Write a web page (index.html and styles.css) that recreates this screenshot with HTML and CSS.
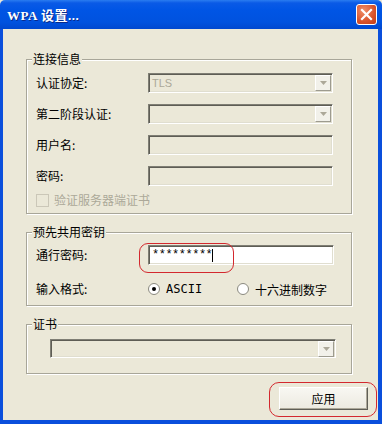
FILE: index.html
```html
<!DOCTYPE html>
<html lang="zh-CN">
<head>
  <meta charset="UTF-8">
  <title>WPA 设置...</title>
  <link rel="stylesheet" href="styles.css">
</head>
<body>

  <div class="window">
    <div class="titlebar">
      <span class="title">WPA 设置...</span>
      <span class="close">
        <svg width="13" height="13" viewBox="0 0 13 13"><path d="M2 2 L11 11 M11 2 L2 11" stroke="#fff" stroke-width="2.2" stroke-linecap="square"/></svg>
      </span>
    </div>

    <div class="client">
      <fieldset class="group conn">
        <legend>连接信息</legend>
        <div class="form">
          <label>认证协定:</label>
          <div class="combo"><span class="val">TLS</span><span class="drop"><svg width="7" height="4" viewBox="0 0 7 4"><path d="M0 0 H7 L3.5 4 Z" fill="#aca899"/></svg></span></div>

          <label>第二阶段认证:</label>
          <div class="combo"><span class="val"></span><span class="drop"><svg width="7" height="4" viewBox="0 0 7 4"><path d="M0 0 H7 L3.5 4 Z" fill="#aca899"/></svg></span></div>

          <label>用户名:</label>
          <div class="field"></div>

          <label>密码:</label>
          <div class="field"></div>
        </div>
        <div class="check"><span class="box"></span>验证服务器端证书</div>
      </fieldset>

      <fieldset class="group psk">
        <legend>预先共用密钥</legend>
        <div class="form">
          <label>通行密码:</label>
          <div class="mark-wrap">
            <div class="field white"><span class="stars">*********</span><span class="caret"></span></div>
            <span class="mark mark-pass"></span>
          </div>

          <label>输入格式:</label>
          <div class="radios">
            <span class="radio-item first"><span class="radio on"></span>ASCII</span>
            <span class="radio-item"><span class="radio"></span>十六进制数字</span>
          </div>
        </div>
      </fieldset>

      <fieldset class="group cert">
        <legend>证书</legend>
        <div class="combo wide"><span class="val"></span><span class="drop"><svg width="7" height="4" viewBox="0 0 7 4"><path d="M0 0 H7 L3.5 4 Z" fill="#aca899"/></svg></span></div>
      </fieldset>

      <div class="actions">
        <div class="mark-wrap">
          <button class="btn">应用</button>
          <span class="mark mark-btn"></span>
        </div>
      </div>
    </div>
  </div>

</body>
</html>
```

FILE: styles.css
```css
body { margin: 0; background: #ebe8d8; font-family: "Noto Sans CJK SC", "Liberation Sans", sans-serif; font-size: 12px; color: #000; }

.window { width: 382px; height: 424px; display: flex; flex-direction: column; box-sizing: border-box; }

.titlebar { height: 29px; flex: none; display: flex; align-items: center; justify-content: space-between; padding: 0 5px 0 7px; box-sizing: border-box;
  background: linear-gradient(#2a7cf0 0, #0a5ae6 3px, #0055e5 10px, #0052df 22px, #0048cf 29px); border-radius: 5px 5px 0 0; }
.title { color: #fff; font-family: "Liberation Serif", "Noto Sans CJK SC", serif; font-weight: bold; font-size: 13px; letter-spacing: 0.5px; text-shadow: 1px 1px 0 #0a2a8a; }
.close { width: 21px; height: 21px; box-sizing: border-box; border: 1px solid #fff; border-radius: 3px; display: flex; align-items: center; justify-content: center;
  background: radial-gradient(circle at 35% 30%, #f0906a, #d9522a 60%, #c23c16); }

.client { flex: 1; border: solid #0a4fdc; border-width: 0 4px 4px 3px; background: #ebe8d8; padding-top: 23px; box-sizing: border-box; }

.group { margin: 0 0 0 23px; width: 326px; box-sizing: border-box; border: 1px solid #a8a699; box-shadow: inset 1px 1px 0 #fff, 1px 1px 0 #fff; border-radius: 0; }
.group legend { padding: 0 1px; line-height: 14px; background: #ebe8d8; }
.conn { padding: 7px 18px 6px 9px; }
.psk { margin-top: 11px; padding: 6px 17px 6px 9px; }
.cert { margin-top: 11px; padding: 8px 15px 15px 23px; }
.conn legend, .psk legend { margin-left: -4px; }
.cert legend { margin-left: -18px; }

.form { display: grid; grid-template-columns: 112px 1fr; row-gap: 11px; align-items: center; }
.psk .form { row-gap: 14px; }
.form label { line-height: 20px; }

.combo, .field { height: 20px; box-sizing: border-box; border: 1px solid; border-color: #7f7e74 #fff #fff #7f7e74; box-shadow: inset 1px 1px 0 #5e5d55, inset -1px -1px 0 #e0ded0; background: #ebe8d8; display: flex; align-items: center; }
.combo .val { flex: 1; padding-left: 3px; color: #aca899; font-family: "Liberation Sans", sans-serif; font-size: 11px; }
.combo .drop { width: 16px; height: 16px; margin-right: 1px; box-sizing: border-box; background: #f2f1ea; border: 1px solid; border-color: #fff #9d9b8f #9d9b8f #fff; display: flex; align-items: center; justify-content: center; }
.combo.wide { height: 19px; }

.field.white { background: #fff; }
.stars { padding-left: 3px; font-family: "Liberation Mono", monospace; font-size: 12px; letter-spacing: -0.5px; }
.caret { width: 1px; height: 13px; background: #000; }

.check { display: flex; align-items: center; gap: 5px; margin-top: 7px; color: #aca899; line-height: 14px; }
.check .box { width: 13px; height: 13px; box-sizing: border-box; border: 1px solid #cbc7b8; }

.radios { display: flex; align-items: center; height: 20px; }
.radio-item { display: flex; align-items: center; gap: 6px; }
.radio-item.first { width: 89px; font-family: "DejaVu Sans Mono", monospace; font-size: 12px; }
.radio { width: 12px; height: 12px; box-sizing: border-box; border-radius: 50%; border: 1px solid #8a897f; background: #fff; display: flex; align-items: center; justify-content: center; }
.radio.on::after { content: ""; width: 4px; height: 4px; border-radius: 50%; background: #000; }

.mark-wrap { position: relative; }
.mark { position: absolute; border: 1px solid #d3282e; pointer-events: none; }
.mark-pass { left: -9px; top: -2px; width: 93px; height: 28px; border-radius: 9px; }
.mark-btn { left: -10px; right: -9px; top: -5px; bottom: -7px; border-radius: 10px; }

.actions { display: flex; justify-content: flex-end; padding: 13px 10px 0 0; }
.btn { display: block; width: 89px; height: 23px; font: inherit; background: linear-gradient(#f8f7f2, #eceae0); border: 1px solid; border-color: #fff #5f5e56 #5f5e56 #fff; box-shadow: inset -1px -1px 0 #aca899; padding: 0; }
```
